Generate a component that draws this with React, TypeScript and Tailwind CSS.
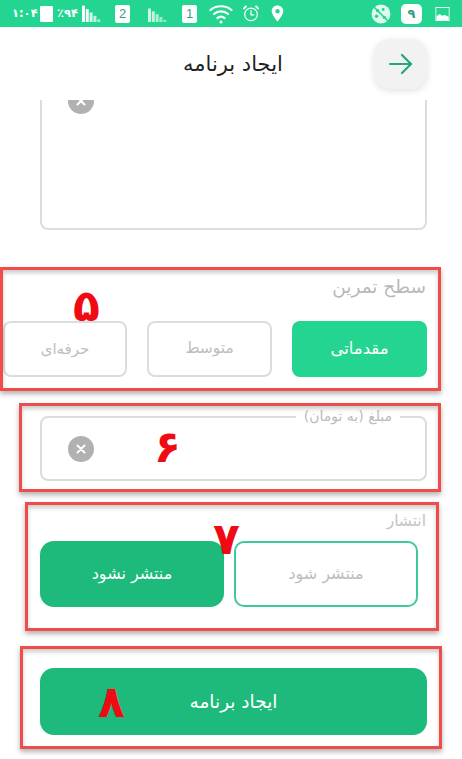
import React from "react";

const fa = { fontFamily: '"DejaVu Sans", "Noto Sans", sans-serif' };

function Signal({ w, h, bars }: { w: number; h: number; bars: number }) {
  const step = w / bars;
  return (
    <svg width={w} height={h} viewBox={`0 0 ${w} ${h}`} className="shrink-0">
      {Array.from({ length: bars }).map((_, i) => {
        const top = ((i + 0.2) / bars) * h;
        return <rect key={i} x={i * step} y={top} width={step - 0.8} height={h - top} fill="white" opacity={1 - i * 0.1} />;
      })}
    </svg>
  );
}

function Sim({ n }: { n: string }) {
  return (
    <div className="flex h-[18px] w-[15px] shrink-0 items-center justify-center rounded-[2px] bg-white text-[13px] leading-none text-[#3a9d7c] font-['Liberation_Sans',sans-serif]">
      {n}
    </div>
  );
}

function StatusBar() {
  return (
    <div className="flex h-[27px] shrink-0 items-center bg-[#23d590] pl-[12px] pr-[12px] text-white">
      <span className="w-[24px] text-[11.500px] font-bold leading-none" style={fa}>۱:۰۴</span>
      <div className="ml-[4px] h-[16px] w-[13px] rounded-[1px] bg-white" />
      <span className="ml-[4px] w-[21px] text-[11.500px] font-bold leading-none" style={fa}>٪۹۴</span>
      <div className="ml-[4px]"><Signal w={19} h={17} bars={5} /></div>
      <div className="ml-[14px]"><Sim n="2" /></div>
      <div className="ml-[18px] mt-[3px] opacity-80"><Signal w={19} h={14} bars={5} /></div>
      <div className="ml-[15px]"><Sim n="1" /></div>
      <svg className="ml-[12px] shrink-0" width="24" height="20" viewBox="0 0 24 20" fill="none" stroke="white" strokeWidth="2.2" strokeLinecap="round">
        <path d="M1.500 6 C7 1 17 1 22.500 6" />
        <path d="M5 10 C9 6.500 15 6.500 19 10" />
        <path d="M8.500 14 C10.500 12.500 13.500 12.500 15.500 14" />
        <circle cx="12" cy="18" r="1.500" fill="white" stroke="none" />
      </svg>
      <svg className="ml-[9px] shrink-0" width="18" height="19" viewBox="0 0 20 20" fill="none" stroke="white" strokeWidth="1.300">
        <circle cx="10" cy="11" r="7" />
        <path d="M10 6.500V11.500H13.500" />
        <path d="M1.500 5 L5 1.500" strokeWidth="2" />
        <path d="M15 1.500 L18.500 5" strokeWidth="2" />
      </svg>
      <svg className="ml-[11px] shrink-0" width="13" height="17" viewBox="0 0 14 19">
        <path fillRule="evenodd" fill="white" d="M7 0.500C3.200 0.500 0.500 3.400 0.500 7C0.500 11 7 18.500 7 18.500C7 18.500 13.500 11 13.500 7C13.500 3.400 10.800 0.500 7 0.500ZM7 4.600A2.500 2.500 0 1 1 7 9.600A2.500 2.500 0 1 1 7 4.600Z" />
      </svg>
      <div className="flex-1" />
      <svg className="shrink-0" width="20" height="20" viewBox="0 0 18 18">
        <circle cx="9" cy="9" r="8.500" fill="white" opacity="0.85" />
        <circle cx="6" cy="6" r="1.500" fill="#23d590" />
        <circle cx="11" cy="5" r="1.300" fill="#23d590" />
        <circle cx="5" cy="11" r="1.500" fill="#23d590" />
        <circle cx="12" cy="12" r="1.500" fill="#23d590" />
        <path d="M2 2L16 16" stroke="#23d590" strokeWidth="1.500" />
      </svg>
      <div className="ml-[10px] flex h-[20px] w-[21px] shrink-0 items-center justify-center rounded-[5px] bg-white text-[13px] font-bold leading-none text-[#3a9d7c]" style={fa}>۹</div>
      <svg className="ml-[13px] shrink-0" width="15" height="14" viewBox="0 0 15 15">
        <rect x="0.500" y="0.500" width="14" height="14" fill="none" stroke="white" />
        <rect x="1" y="1" width="13" height="13" fill="#23d590" opacity="0.6" />
        <path d="M1 10L4.500 7.500L7 9.500L10 8.500L14 10.500V14H1Z" fill="white" />
      </svg>
    </div>
  );
}

function Header() {
  return (
    <div className="flex h-[73px] shrink-0 items-center justify-between pl-[183px] pr-[35px]">
      <h1 className="mt-[1px] text-[21px] font-normal leading-none text-[#222]" style={fa} dir="rtl">ایجاد برنامه</h1>
      <button className="flex h-[50px] w-[53px] items-center justify-center rounded-[16px] bg-[#f2f2f2] shadow-[0_2px_7px_rgba(0,0,0,0.12)]">
        <svg width="26" height="26" viewBox="0 0 26 26" fill="none" stroke="#23a878" strokeWidth="2.200" strokeLinecap="round" strokeLinejoin="round">
          <path d="M2 13H23" />
          <path d="M14 4L23 13L14 22" />
        </svg>
      </button>
    </div>
  );
}

function ClearIcon() {
  return (
    <div className="flex h-[26px] w-[26px] items-center justify-center rounded-full bg-[#b1b1b1]">
      <svg width="12" height="12" viewBox="0 0 12 12" stroke="white" strokeWidth="2" strokeLinecap="round">
        <path d="M2.500 2.500L9.500 9.500M9.500 2.500L2.500 9.500" />
      </svg>
    </div>
  );
}

function Box({ className, children }: { className: string; children: React.ReactNode }) {
  return <div className={`flex items-center justify-center ${className}`} style={fa}>{children}</div>;
}

function Annotation({ className, digit, digitClass }: { className: string; digit: string; digitClass: string }) {
  return (
    <div className={`pointer-events-none absolute border-[3px] border-[#f04c4c] shadow-[0_3px_5px_rgba(0,0,0,0.3),inset_0_3px_4px_rgba(0,0,0,0.2)] ${className}`}>
      <span className={`absolute text-[44px] font-bold leading-none text-[#f00a14] ${digitClass}`} style={fa}>{digit}</span>
    </div>
  );
}

export default function App() {
  return (
    <div className="relative flex h-[759px] w-[462px] flex-col overflow-hidden bg-white" style={fa}>
      <StatusBar />
      <Header />

      {/* top clipped card */}
      <div className="ml-[40px] mr-[35px] h-[130px] shrink-0 overflow-hidden rounded-b-[8px] border-x-2 border-b-2 border-[#dcdcdc] pl-[26px]">
        <div className="mt-[-12px]"><ClearIcon /></div>
      </div>

      {/* level */}
      <div className="mt-[45px] shrink-0" dir="rtl">
        <div className="pr-[36px] text-[18.500px] leading-[24px] text-[#b9b9b9]">سطح تمرین</div>
        <div className="mt-[22px] flex pr-[35px]">
          <Box className="h-[56px] w-[135px] rounded-[8px] bg-[#23d590] text-[16.500px] text-white">مقدماتی</Box>
          <Box className="mr-[20px] h-[56px] w-[125px] rounded-[8px] border-2 border-[#dcdcdc] text-[15.500px] text-[#bdbdbd]">متوسط</Box>
          <Box className="mr-[20px] h-[56px] w-[124px] rounded-[8px] border-2 border-[#dcdcdc] text-[15px] text-[#bdbdbd]">حرفه‌ای</Box>
        </div>
      </div>

      {/* price */}
      <div className="relative ml-[40px] mr-[35px] mt-[39px] flex h-[65px] shrink-0 items-center rounded-[8px] border-2 border-[#dcdcdc] pl-[26px]">
        <span className="absolute right-[25px] top-[-10px] bg-white px-[8px] text-[14px] leading-[16px] text-[#bbbbbb]" dir="rtl">مبلغ (به تومان)</span>
        <ClearIcon />
      </div>

      {/* publish */}
      <div className="mt-[31px] shrink-0" dir="rtl">
        <div className="pr-[36px] text-[15.500px] leading-[18px] text-[#c4c4c4]">انتشار</div>
        <div className="mt-[11px] flex pr-[44px]">
          <Box className="h-[66px] w-[184px] rounded-[10px] border-[2.500px] border-[#3fc99a] text-[16px] text-[#bdbdbd]">منتشر شود</Box>
          <Box className="mr-[10px] h-[66px] w-[184px] rounded-[14px] bg-[#1dba7c] text-[16px] text-white">منتشر نشود</Box>
        </div>
      </div>

      {/* submit */}
      <Box className="ml-[40px] mr-[35px] mt-[61px] h-[67px] shrink-0 rounded-[14px] bg-[#1dba7c] text-[18.500px] text-white">
        <span dir="rtl">ایجاد برنامه</span>
      </Box>

      <Annotation className="left-0 top-[267px] h-[124px] w-[441px]" digit="۵" digitClass="left-[70px] top-[14px]" />
      <Annotation className="left-[19px] top-[403px] h-[89px] w-[422px]" digit="۶" digitClass="left-[132px] top-[19px]" />
      <Annotation className="left-[25px] top-[502px] h-[129px] w-[414px]" digit="۷" digitClass="left-[185px] top-[12px]" />
      <Annotation className="left-[20px] top-[646px] h-[103px] w-[422px]" digit="۸" digitClass="left-[75px] top-[31px]" />
    </div>
  );
}
